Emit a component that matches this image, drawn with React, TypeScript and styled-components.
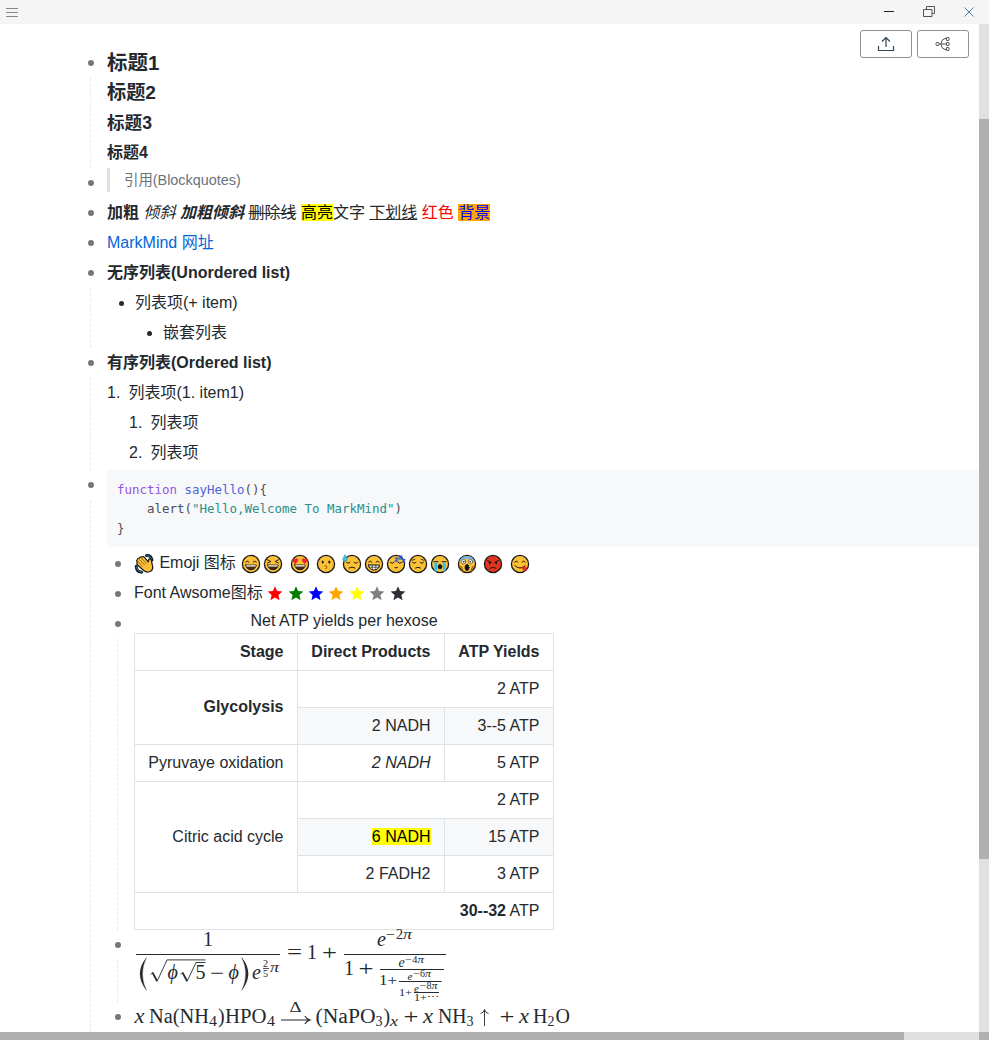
import React from "react";
import styled, { createGlobalStyle } from "styled-components";

const GlobalStyle = createGlobalStyle`
  * { box-sizing: border-box; }
  body {
    margin: 0;
    background: #fff;
    color: #24292e;
    font: 16px/30px "Liberation Sans", "Noto Sans CJK SC", sans-serif;
  }
`;

const Window = styled.div`
  display: flex;
  flex-direction: column;
  width: 989px;
  height: 1040px;
  overflow: hidden;
`;
const TitleBar = styled.header`
  display: flex;
  align-items: center;
  justify-content: space-between;
  flex: none;
  height: 24px;
  padding: 0 14px 0 6px;
  background: #f5f5f5;
  svg { display: block; }
`;
const WindowControls = styled.div`
  display: flex;
  gap: 28px;
`;
const Body = styled.div`
  position: relative;
  display: flex;
  flex: 1;
  min-height: 0;
`;
const Page = styled.main`
  flex: 1;
  min-width: 0;
  overflow: hidden;
  padding: 24px 0 0 87px;
`;
const VerticalTrack = styled.div`
  flex: none;
  width: 10px;
  padding-top: 95px;
  background: #e0e0e0;
`;
const VerticalThumb = styled.div`
  height: 740px;
  background: #b0b0b0;
`;
const HorizontalTrack = styled.div`
  display: flex;
  justify-content: space-between;
  flex: none;
  height: 8px;
  background: #e0e0e0;
`;
const HorizontalThumb = styled.div<{ $width: number }>`
  width: ${(p) => p.$width}px;
  background: #b0b0b0;
`;
const Toolbar = styled.div`
  position: absolute;
  top: 6px;
  right: 20px;
  display: flex;
  gap: 5px;
`;
const ToolButton = styled.button`
  display: flex;
  align-items: center;
  justify-content: center;
  width: 52px;
  height: 28px;
  padding: 0;
  border: 1px solid #8f8f8f;
  border-radius: 3px;
  background: #fff;
`;

const NodeRow = styled.section`
  display: flex;
`;
const Rail = styled.div`
  display: flex;
  flex-direction: column;
  flex: none;
  width: 20px;
`;
const Dot = styled.i`
  flex: none;
  width: 6.5px;
  height: 6.5px;
  margin: 11.5px 0 12px 0.8px;
  border-radius: 50%;
  background: #777;
`;
const Guide = styled.div`
  flex: 1;
  margin-left: 3px;
  border-left: 1px dashed #e9e9e9;
`;
const NodeContent = styled.div<{ $bottom?: number }>`
  flex: 1;
  min-width: 0;
  padding-bottom: ${(p) => p.$bottom ?? 0}px;
`;
const Children = styled.div`
  padding-left: 7px;
`;
const Node = ({ children, bottom }: { children: React.ReactNode; bottom?: number }) => (
  <NodeRow>
    <Rail>
      <Dot />
      <Guide />
    </Rail>
    <NodeContent $bottom={bottom}>{children}</NodeContent>
  </NodeRow>
);

const Line = styled.div<{ $bold?: boolean }>`
  height: 30px;
  line-height: 29px;
  white-space: pre;
  font-weight: ${(p) => (p.$bold ? 700 : 400)};
`;
const Heading = styled.div<{ $size: number }>`
  height: 30px;
  line-height: 30px;
  font-size: ${(p) => p.$size}px;
  font-weight: 700;
`;
const Quote = styled.blockquote`
  height: 24px;
  margin: 0;
  padding-left: 14px;
  border-left: 3px solid #dfe2e5;
  color: #6a737d;
  font-size: 14.4px;
  line-height: 24px;
`;
const Marked = styled.mark<{ $bg?: string; $color?: string }>`
  display: inline-block;
  height: 17px;
  line-height: 17px;
  background: ${(p) => p.$bg ?? "#ff0"};
  color: ${(p) => p.$color ?? "#000"};
`;
const Red = styled.span`
  color: #f00;
`;
const Link = styled.a`
  color: #0366d6;
`;
const ListItem = styled.div<{ $indent: number; $marker: number }>`
  display: grid;
  grid-template-columns: ${(p) => p.$marker}px auto;
  justify-content: start;
  height: 30px;
  padding-left: ${(p) => p.$indent}px;
  line-height: 29px;
`;
const Disc = styled.i`
  width: 5px;
  height: 5px;
  margin-top: 13px;
  border-radius: 50%;
  background: #24292e;
`;

const CodeBlock = styled.pre`
  height: 76.5px;
  margin: 0 0 2.5px;
  padding: 10px;
  border-radius: 3px 0 0 3px;
  background: #f6f8fa;
  color: #4f4f55;
  font: 12.46px/19.3px "DejaVu Sans Mono", monospace;
`;
const CodeLine = styled.code`
  display: flex;
  height: 19.3px;
  font: inherit;
`;
const Token = styled.span<{ $kind?: "keyword" | "name" | "string" }>`
  color: ${(p) => (p.$kind ? { keyword: "#9353e0", name: "#5065d8", string: "#2a8f8b" }[p.$kind] : "inherit")};
`;

const IconLine = styled(Line)`
  display: flex;
  align-items: flex-start;
  line-height: 28px;
  svg { flex: none; margin-top: 4.500px; }
`;
const Gap = styled.span<{ $width: number }>`
  width: ${(p) => p.$width}px;
`;
const Stars = styled.span`
  display: flex;
  gap: 4.45px;
  margin-left: 4.5px;
`;

const Table = styled.table`
  width: 420px;
  border-collapse: collapse;
  table-layout: fixed;
  line-height: 24px;
  caption { height: 24px; line-height: 23px; }
  th, td {
    height: 37px;
    padding: 5px 13.5px 6px 13px;
    border: 1px solid #dfe2e5;
    text-align: right;
    white-space: nowrap;
  }
`;
const Cell = styled.td<{ $shaded?: boolean }>`
  background: ${(p) => (p.$shaded ? "#f6f8fa" : "#fff")};
`;

const Formula = styled.svg`
  display: block;
  overflow: visible;
  fill: #24292e;
  font-family: "Liberation Serif", serif;
`;

type Mood = "smile" | "squint" | "hearts" | "hush" | "sweat" | "grin" | "sleep" | "sad" | "cry" | "scream" | "angry" | "yum";

const closedUp = <path d="M4.7 8q1.6-2 3.2 0M12.1 8q1.6-2 3.2 0" />;
const closedDown = <path d="M4.5 8.5q1.700 1.800 3.400 0M12.100 8.500q1.700 1.800 3.400 0" />;
const openMouth = (
  <>
    <path d="M4.700 11h10.600q-.8 4.700-5.300 4.700T4.700 11z" fill="#4a2b12" strokeWidth=".9" />
    <path d="M5.800 11.900h8.400" stroke="#fff" strokeWidth="1.300" />
  </>
);
const heart = "M0 2.700C-4.500-.2-2.300-3.500 0-1.400 2.300-3.500 4.500-.2 0 2.700z";

const faces: Record<Mood, React.ReactNode> = {
  smile: <>{closedUp}{openMouth}</>,
  squint: <><path d="M4.500 5.800l3.400 1.700-3.400 1.500M15.500 5.800l-3.400 1.700 3.400 1.500" />{openMouth}</>,
  hearts: (
    <>
      {openMouth}
      <g fill="#ee2635" stroke="#ee2635" strokeWidth=".7">
        <path d={heart} transform="translate(5.200 6.700)" />
        <path d={heart} transform="translate(14.800 6.700)" />
      </g>
    </>
  ),
  hush: <><g fill="#111" stroke="none"><ellipse cx="6.700" cy="8" rx="1" ry="1.500" /><ellipse cx="13.300" cy="8" rx="1" ry="1.500" /></g><path d="M9 11.700q2.500 0 1.500 1.400 1.500 1-.9 1.600" stroke="#8b5a16" /></>,
  sweat: <>{closedDown}<path d="M7 14q3-2 6 0" /><path d="M3 1q-3 4-2 5.300 2 2 4 0Q6 5 3 1z" fill="#41bfe8" stroke="#238db4" strokeWidth=".5" /></>,
  grin: <>{closedUp}<path d="M4.500 11h11q-.8 5-5.500 5t-5.500-5z" fill="#fff" /><path d="M5 13.200h10M8.200 11v4.500M11.800 11v4.500" strokeWidth=".7" /></>,
  sleep: <>{closedDown}<path d="M9 13.700h2.500" /><g stroke="#2457e6" strokeWidth="1.200"><path d="M9 4h3l-3 3.200h3M13 2h3l-3 3h3M16.500 5.500h2.300l-2.300 2.400h2.300" /></g></>,
  sad: <><path d="M4 6.300l2.800-.9M16 6.300l-2.800-.9" strokeWidth=".8" />{closedDown}<path d="M7.500 14q2.500-1.500 5 0" /></>,
  cry: <><path d="M4 7.700h4M12 7.700h4" /><path d="M4.400 8.500h2.800V18l-2.800-1.300zM12.800 8.500h2.800v8.200L12.800 18z" fill="#36bfe8" stroke="none" /><ellipse cx="10" cy="12.700" rx="1.800" ry="2.200" fill="#111" /></>,
  scream: (
    <>
      <path d="M2 8a8.300 8.300 0 0 1 16 0q-3-3-8-3T2 8z" fill="#7fb4e2" stroke="none" />
      <g fill="#fff" strokeWidth=".5"><circle cx="6.500" cy="7.700" r="2.100" /><circle cx="13.500" cy="7.700" r="2.100" /></g>
      <g fill="#111" stroke="none"><circle cx="6.700" cy="7.800" r=".8" /><circle cx="13.300" cy="7.800" r=".8" /></g>
      <ellipse cx="10" cy="13.500" rx="1.900" ry="3" fill="#111" />
      <path d="M2 12q3 .5 3.500 3.500l.5 3M18 12q-3 .5-3.500 3.500l-.5 3" stroke="#9a5d10" strokeWidth="1.200" />
    </>
  ),
  angry: <><path d="M4.500 6.500l3.800 1.800M15.500 6.500l-3.800 1.800" /><g fill="#111" stroke="none"><circle cx="6.700" cy="9.100" r="1.100" /><circle cx="13.300" cy="9.100" r="1.100" /></g><path d="M7 14.300q3-2.400 6 0" /></>,
  yum: <>{closedUp}<path d="M5 11.700q5 5 10 0" /><path d="M12 13.500l2.500-1.500q3.400 2.600 1.800 4.300t-3.200-.5z" fill="#ee2635" stroke="#a31522" strokeWidth=".5" /></>,
};

const Emoji = ({ mood }: { mood: Mood }) => (
  <svg width="22" height="20" viewBox="-1 0 22 20" fill="none" stroke="#1c1a17" strokeWidth="1" strokeLinecap="round" strokeLinejoin="round">
    <circle cx="10" cy="10" r="8.600" fill={mood === "angry" ? "#e23420" : "#fcc136"} strokeWidth="1.300" />
    {faces[mood]}
  </svg>
);

const WavingHand = () => (
  <svg width="21" height="20" viewBox="0 0 21 20" strokeLinecap="round" strokeLinejoin="round">
    <path d="M12.500 1.500q4.500-.5 5.500 4.500M2.200 12.200q0 5.500 5.500 6" fill="none" stroke="#14272e" strokeWidth="3" />
    <path d="M12.700 1.700q3.800-.2 4.900 3.800M2.400 12.800q.3 4.600 5 5.200" fill="none" stroke="#2b6f88" strokeWidth="1" />
    <path d="M3.200 8.300Q2 6.700 3.300 5.700q.2-1.800 2-1.700.8-1.700 2.400-.8 1.300-1.300 2.600 0l4 4.700.3-2.200q1-1.700 2.500-.2l1.300 5.700q1.400 5-2.900 6.600-3.200 1-5.800-1.300L3.500 11q-1.300-1.300-.3-2.700z" fill="#fbbd38" stroke="#1c1a17" strokeWidth="1.200" />
    <path d="M4 7.700l4.600 4.600M5.500 5.500l5 5.200M7.700 4.300l4.600 5" fill="none" stroke="#8a5710" strokeWidth=".8" />
  </svg>
);

const Star = ({ color }: { color: string }) => (
  <svg width="16" height="18" viewBox="0 0 16 18" fill={color}>
    <path d="M8 2.300l2.100 4.800 5.300.5-4 3.500 1.200 5.200L8 13.600l-4.600 2.700 1.200-5.200-4-3.500 5.300-.5z" />
  </svg>
);

const emojiGroups: Mood[][] = [
  ["smile", "squint"],
  ["hearts"],
  ["hush"],
  ["sweat", "grin", "sleep", "sad", "cry"],
  ["scream"],
  ["angry"],
  ["yum"],
];
const starColors = ["#f00", "#008000", "#00f", "#ffa500", "#ff0", "#808080", "#2b3036"];

/* One run of formula text: x and baseline y, font size and drawn width. */
const Run = ({ x, y, s = 20, w, it, children }: { x: number; y: number; s?: number; w?: number; it?: boolean; children: string }) => (
  <text x={x} y={y} fontSize={s} fontStyle={it ? "italic" : "normal"} textLength={w} lengthAdjust="spacingAndGlyphs">
    {children}
  </text>
);

const ContinuedFraction = () => (
  <Formula width="450" height="72" viewBox="0 0 450 72">
    <Run x={69} y={16}>1</Run>
    <path d="M2 23.900h144v1.100H2zM210 23.900h102v1.100H210zM246 38.900h64v1H246zM265 50.900h42.500v1H265zM280 61.900h25v1H280z" />
    <path d="M12.500 27.500Q-.5 43.500 12.500 60.500 4.500 44 12.500 27.500zM107.700 27.500q13 16 0 33 8-16.500 0-33z" stroke="#24292e" strokeWidth=".3" />
    <g fill="none" stroke="#24292e">
      <path d="M16.500 44.500l2.200-2" strokeWidth=".8" />
      <path d="M18.500 42.500l4.500 8.500" strokeWidth="1.700" />
      <path d="M23 51.500 33 29.900h38.500" strokeWidth=".9" />
      <path d="M46.500 44.500l2.200-2" strokeWidth=".8" />
      <path d="M48.500 42.500l4.500 8.500" strokeWidth="1.700" />
      <path d="M53 51.500 62 32.500h9.500" strokeWidth=".9" />
    </g>
    <Run x={33.500} y={49} it>ϕ</Run>
    <Run x={61.500} y={49}>5</Run>
    <Run x={76} y={50} s={21} w={14}>−</Run>
    <Run x={94.500} y={49} it>ϕ</Run>
    <Run x={118} y={49} s={20} it>e</Run>
    <Run x={129} y={36.500} s={10}>2</Run>
    <path d="M129 38.100h6v.8h-6z" />
    <Run x={129} y={46.500} s={10}>5</Run>
    <Run x={136} y={42} s={14} w={9} it>π</Run>
    <Run x={153} y={29} s={21} w={15}>=</Run>
    <Run x={173} y={29}>1</Run>
    <Run x={188} y={30} s={21} w={15}>+</Run>
    <Run x={243} y={16} s={20} it>e</Run>
    <Run x={252} y={9} s={14} w={9}>−</Run>
    <Run x={262} y={9} s={14}>2</Run>
    <Run x={269} y={9} s={14} w={9} it>π</Run>
    <Run x={210} y={45}>1</Run>
    <Run x={224.500} y={46} s={21} w={15}>+</Run>
    <Run x={264.500} y={37} s={14} it>e</Run>
    <Run x={271} y={33} s={10} w={7}>−</Run>
    <Run x={278} y={33} s={11}>4</Run>
    <Run x={283.500} y={33} s={11} w={6.500} it>π</Run>
    <Run x={245} y={55} s={14} w={18}>1+</Run>
    <Run x={273.500} y={49.500} s={11} it>e</Run>
    <Run x={279} y={47} s={10} w={7}>−</Run>
    <Run x={286} y={47} s={10}>6</Run>
    <Run x={291} y={47} s={10} w={6} it>π</Run>
    <Run x={265} y={66} s={11} w={13}>1+</Run>
    <Run x={280} y={61.500} s={11} it>e</Run>
    <Run x={285.500} y={58.500} s={10} w={7}>−</Run>
    <Run x={292.500} y={58.500} s={10}>8</Run>
    <Run x={297.500} y={58.500} s={10} w={6} it>π</Run>
    <Run x={280} y={71} s={11} w={25}>1+⋯</Run>
  </Formula>
);

const Reaction = () => (
  <Formula width="450" height="30" viewBox="0 0 450 30">
    <Run x={0.500} y={20.500} s={20} w={10} it>x</Run>
    <Run x={15} y={20.500} w={60}>Na(NH</Run>
    <Run x={75} y={24} s={14} w={8}>4</Run>
    <Run x={84} y={20.500}>)</Run>
    <Run x={91} y={20.500} w={41.500}>HPO</Run>
    <Run x={133} y={24} s={14} w={8}>4</Run>
    <Run x={155.500} y={9.500} s={15.500} w={12}>Δ</Run>
    <path d="M147 18h28M171 14q1.500 3 5 4-3.500 1-5 4" fill="none" stroke="#24292e" strokeWidth="1.100" />
    <Run x={181.500} y={20.500} w={60}>(NaPO</Run>
    <Run x={241.500} y={24} s={14}>3</Run>
    <Run x={249.500} y={20.500}>)</Run>
    <Run x={256} y={24} s={15} w={8} it>x</Run>
    <Run x={269.500} y={21.500} s={21} w={15}>+</Run>
    <Run x={289} y={20.500} s={20} w={10} it>x</Run>
    <Run x={304} y={20.500} w={28.500}>NH</Run>
    <Run x={332.500} y={24} s={14}>3</Run>
    <path d="M350.500 24V8M346.500 11.500q3-.5 4-4 1 3.500 4 4" fill="none" stroke="#24292e" strokeWidth=".9" />
    <Run x={365.500} y={21.500} s={21} w={15}>+</Run>
    <Run x={385} y={20.500} s={20} w={10} it>x</Run>
    <Run x={399} y={20.500}>H</Run>
    <Run x={413.500} y={24} s={14}>2</Run>
    <Run x={421.500} y={20.500}>O</Run>
  </Formula>
);

export default function App() {
  return (
    <Window>
      <GlobalStyle />
      <TitleBar>
        <svg width="12" height="12" viewBox="0 0 12 12" stroke="#888">
          <path d="M0 2.500h12M0 6.500h12M0 10.500h12" />
        </svg>
        <WindowControls>
          <svg width="12" height="12" viewBox="0 0 12 12" stroke="#222">
            <path d="M1 5.500h10" />
          </svg>
          <svg width="12" height="12" viewBox="0 0 12 12" fill="none" stroke="#555">
            <path d="M.5 3.500h8.500v7H.5zM3.500 3.500v-3h8v7H9" />
          </svg>
          <svg width="12" height="12" viewBox="0 0 12 12" stroke="#557da3">
            <path d="M1.500 1.500l9 9M10.500 1.500l-9 9" />
          </svg>
        </WindowControls>
      </TitleBar>
      <Body>
        <Page>
          <Node>
            <Heading $size={20.5}>标题1</Heading>
            <Heading $size={19.2}>标题2</Heading>
            <Heading $size={17.6}>标题3</Heading>
            <Heading $size={16}>标题4</Heading>
          </Node>
          <Node>
            <Quote>引用(Blockquotes)</Quote>
          </Node>
          <Node>
            <Line>
              <b>加粗</b> <i>倾斜</i> <b><i>加粗倾斜</i></b> <del>删除线</del> <Marked>高亮</Marked>文字 <u>下划线</u> <Red>红色</Red>{" "}
              <Marked $bg="#ffa500" $color="#00f">背景</Marked>
            </Line>
          </Node>
          <Node>
            <Line><Link>MarkMind 网址</Link></Line>
          </Node>
          <Node>
            <Line $bold>无序列表(Unordered list)</Line>
            <ListItem $indent={12} $marker={16}><Disc />列表项(+ item)</ListItem>
            <ListItem $indent={40} $marker={16}><Disc />嵌套列表</ListItem>
          </Node>
          <Node bottom={2}>
            <Line $bold>有序列表(Ordered list)</Line>
            <ListItem $indent={0} $marker={21.5}><span>1.</span>列表项(1. item1)</ListItem>
            <ListItem $indent={22} $marker={21.5}><span>1.</span>列表项</ListItem>
            <ListItem $indent={22} $marker={21.5}><span>2.</span>列表项</ListItem>
          </Node>
          <Node>
            <CodeBlock>
              <CodeLine>
                <Token $kind="keyword">{"function "}</Token>
                <Token $kind="name">sayHello</Token>
                <Token>{"(){"}</Token>
              </CodeLine>
              <CodeLine>
                <Token>{"    alert("}</Token>
                <Token $kind="string">"Hello,Welcome To MarkMind"</Token>
                <Token>)</Token>
              </CodeLine>
              <CodeLine>
                <Token>{"}"}</Token>
              </CodeLine>
            </CodeBlock>
            <Children>
              <Node>
                <IconLine>
                  <WavingHand />
                  <Gap $width={4.4} />
                  Emoji 图标
                  {emojiGroups.map((group, i) => (
                    <React.Fragment key={i}>
                      <Gap $width={4.4} />
                      {group.map((mood) => <Emoji key={mood} mood={mood} />)}
                    </React.Fragment>
                  ))}
                </IconLine>
              </Node>
              <Node>
                <IconLine>
                  Font Awsome图标
                  <Stars>
                    {starColors.map((color) => <Star key={color} color={color} />)}
                  </Stars>
                </IconLine>
              </Node>
              <Node>
                <Table>
                  <caption>Net ATP yields per hexose</caption>
                  <colgroup>
                    <col width="163" />
                    <col width="147" />
                    <col width="109" />
                  </colgroup>
                  <tbody>
                    <tr><th>Stage</th><th>Direct Products</th><th>ATP Yields</th></tr>
                    <tr><th rowSpan={2}>Glycolysis</th><Cell colSpan={2}>2 ATP</Cell></tr>
                    <tr><Cell $shaded>2 NADH</Cell><Cell $shaded>3--5 ATP</Cell></tr>
                    <tr><Cell>Pyruvaye oxidation</Cell><Cell><i>2 NADH</i></Cell><Cell>5 ATP</Cell></tr>
                    <tr><Cell rowSpan={3}>Citric acid cycle</Cell><Cell colSpan={2}>2 ATP</Cell></tr>
                    <tr><Cell $shaded><Marked>6 NADH</Marked></Cell><Cell $shaded>15 ATP</Cell></tr>
                    <tr><Cell>2 FADH2</Cell><Cell>3 ATP</Cell></tr>
                    <tr><Cell colSpan={3}><b>30--32</b> ATP</Cell></tr>
                  </tbody>
                </Table>
              </Node>
              <Node>
                <ContinuedFraction />
              </Node>
              <Node>
                <Reaction />
              </Node>
            </Children>
          </Node>
        </Page>
        <VerticalTrack>
          <VerticalThumb />
        </VerticalTrack>
        <Toolbar>
          <ToolButton aria-label="Export">
            <svg width="18" height="18" viewBox="0 0 18 18" fill="none" stroke="#2d4656" strokeWidth="1.200">
              <path d="M9 12V2.500M5 6.500l4-4 4 4M1.500 11v4.500h15V11" />
            </svg>
          </ToolButton>
          <ToolButton aria-label="Mind map">
            <svg width="18" height="18" viewBox="0 0 18 18" fill="none" stroke="#4a5058">
              <path d="M5 9h7M12 3.500h-1Q7 4.500 7 9t4 5.500h1" />
              <rect x="2" y="7.500" width="3" height="3" rx="1" />
              <rect x="12.500" y="2.500" width="2.500" height="3" rx=".5" />
              <rect x="12.500" y="7.500" width="2.500" height="3" rx=".5" />
              <rect x="12.500" y="12.500" width="2.500" height="3" rx=".5" />
            </svg>
          </ToolButton>
        </Toolbar>
      </Body>
      <HorizontalTrack>
        <HorizontalThumb $width={904} />
        <HorizontalThumb $width={10} />
      </HorizontalTrack>
    </Window>
  );
}
